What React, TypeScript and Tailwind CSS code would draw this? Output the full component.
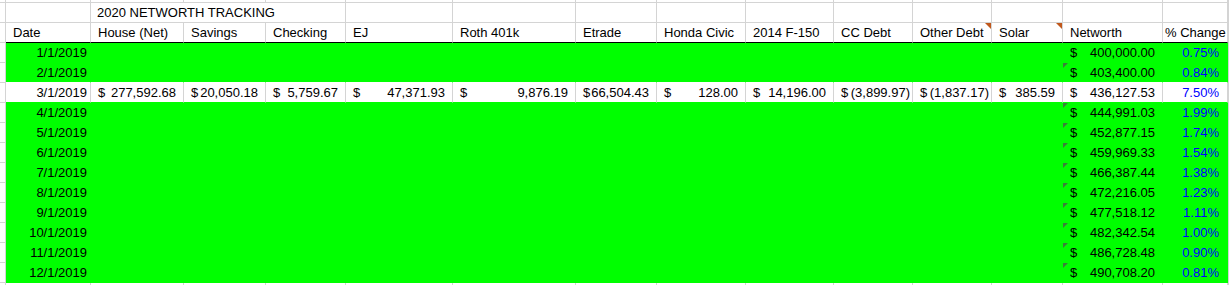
import clsx from "clsx";

const accounts = [
  { key: "house", label: "House (Net)" },
  { key: "savings", label: "Savings" },
  { key: "checking", label: "Checking" },
  { key: "ej", label: "EJ" },
  { key: "roth", label: "Roth 401k" },
  { key: "etrade", label: "Etrade" },
  { key: "honda", label: "Honda Civic" },
  { key: "f150", label: "2014 F-150" },
  { key: "cc", label: "CC Debt" },
  { key: "other", label: "Other Debt", note: true },
  { key: "solar", label: "Solar", note: true },
];

// only March has the detail filled in
const march: Record<string, string> = {
  house: "277,592.68",
  savings: "20,050.18",
  checking: "5,759.67",
  ej: "47,371.93",
  roth: "9,876.19",
  etrade: "66,504.43",
  honda: "128.00",
  f150: "14,196.00",
  cc: "(3,899.97)",
  other: "(1,837.17)",
  solar: "385.59",
};

const months = [
  { date: "1/1/2019", networth: "400,000.00", change: "0.75%" },
  { date: "2/1/2019", networth: "403,400.00", change: "0.84%", flag: true },
  { date: "3/1/2019", networth: "436,127.53", change: "7.50%", detail: true },
  { date: "4/1/2019", networth: "444,991.03", change: "1.99%", flag: true },
  { date: "5/1/2019", networth: "452,877.15", change: "1.74%", flag: true },
  { date: "6/1/2019", networth: "459,969.33", change: "1.54%", flag: true },
  { date: "7/1/2019", networth: "466,387.44", change: "1.38%", flag: true },
  { date: "8/1/2019", networth: "472,216.05", change: "1.23%", flag: true },
  { date: "9/1/2019", networth: "477,518.12", change: "1.11%", flag: true },
  { date: "10/1/2019", networth: "482,342.54", change: "1.00%", flag: true },
  { date: "11/1/2019", networth: "486,728.48", change: "0.90%", flag: true },
  { date: "12/1/2019", networth: "490,708.20", change: "0.81%", flag: true },
];

const plain = "border-r border-b border-[#d4d4d4] bg-white";

function NoteMark() {
  return (
    <svg className="absolute right-0 top-0" width="6" height="6" viewBox="0 0 6 6">
      <polygon points="0,0 6,0 6,6" fill="#c0581c" />
    </svg>
  );
}

function ErrorMark() {
  return (
    <svg className="absolute left-0 top-0" width="5" height="5" viewBox="0 0 5 5">
      <polygon points="0,0 5,0 0,5" fill="#3c7d3c" />
    </svg>
  );
}

function Money({ value }: { value: string }) {
  const negative = value.startsWith("(");
  return (
    <div className={clsx("flex justify-between pl-[7px]", negative ? "pr-[2px]" : "pr-[7px]")}>
      <span>$</span>
      <span>{value}</span>
    </div>
  );
}

export default function App() {
  return (
    <div className="h-[285px] w-[1229px] overflow-hidden bg-white font-['Liberation_Sans',Arial,sans-serif] text-[13px] leading-[19px] text-black">
      <div className="grid grid-cols-[6px_85px_93px_82px_80px_107px_123px_81px_89px_88px_79px_79px_71px_100px_65px_1fr] whitespace-nowrap">
        {/* row 1, mostly scrolled off */}
        {Array.from({ length: 16 }).map((_, i) => (
          <div key={`r1-${i}`} className={clsx("h-[3px]", plain)} />
        ))}

        {/* row 2: title */}
        <div className={clsx("h-[20px]", plain)} />
        <div className={clsx("h-[20px]", plain)} />
        <div className={clsx("col-span-3 h-[20px] pl-[6px]", plain)}>2020 NETWORTH TRACKING</div>
        {Array.from({ length: 11 }).map((_, i) => (
          <div key={`r2-${i}`} className={clsx("h-[20px]", plain)} />
        ))}

        {/* row 3: headers */}
        <div className={clsx("h-[20px]", plain)} />
        <div className="h-[20px] border-r border-b border-[#d4d4d4] border-b-black pl-[7px]">Date</div>
        {accounts.map((a) => (
          <div
            key={a.key}
            className="relative h-[20px] border-r border-b border-[#d4d4d4] border-b-black pl-[7px]"
          >
            {a.label}
            {a.note ? <NoteMark /> : null}
          </div>
        ))}
        <div className="h-[20px] border-r border-b border-[#d4d4d4] border-b-black pl-[7px]">Networth</div>
        <div className="h-[20px] border-r border-b border-[#d4d4d4] border-b-black pl-[2px]">% Change</div>
        <div className={clsx("h-[20px]", plain)} />

        {/* monthly rows */}
        {months.map((m, idx) => {
          const fill = m.detail
            ? "bg-white border-r border-b border-[#d4d4d4] border-b-[#00ff00]"
            : clsx(
                "bg-[#00ff00] border-r border-b border-[#00ff00]",
                idx === 1 && "border-b-white"
              );
          return [
            <div key={`${m.date}-a`} className={clsx("h-[20px]", plain)} />,
            <div key={`${m.date}-d`} className={clsx("h-[20px] pr-[3px] text-right", fill)}>
              {m.date}
            </div>,
            ...accounts.map((a) => (
              <div key={`${m.date}-${a.key}`} className={clsx("h-[20px]", fill)}>
                {m.detail ? <Money value={march[a.key]} /> : null}
              </div>
            )),
            <div key={`${m.date}-n`} className={clsx("relative h-[20px]", fill)}>
              <Money value={m.networth} />
              {m.flag ? <ErrorMark /> : null}
            </div>,
            <div key={`${m.date}-p`} className={clsx("h-[20px] pr-[8px] text-right text-[#0000ff]", fill)}>
              {m.change}
            </div>,
            <div key={`${m.date}-z`} className={clsx("h-[20px]", plain)} />,
          ];
        })}

        {/* row 16, cut off at the bottom */}
        {Array.from({ length: 16 }).map((_, i) => (
          <div key={`r16-${i}`} className="h-[3px] border-r border-[#d4d4d4] bg-white" />
        ))}
      </div>
    </div>
  );
}
